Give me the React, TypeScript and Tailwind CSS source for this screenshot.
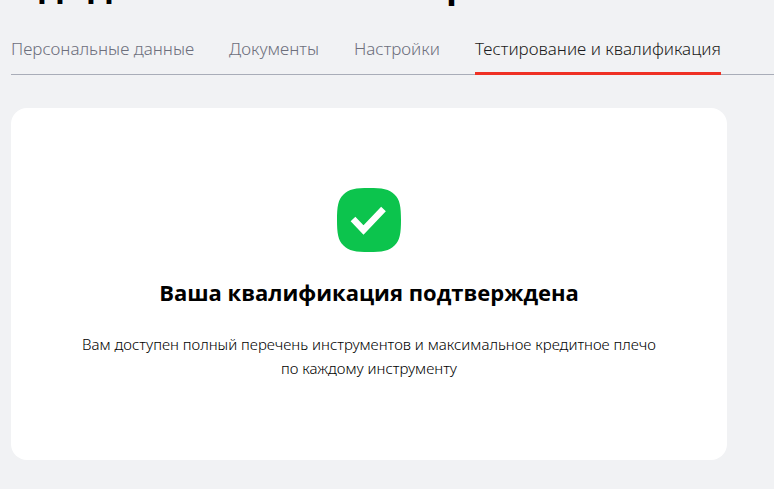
const tabs = [
  { label: "Персональные данные", href: "#personal" },
  { label: "Документы", href: "#documents" },
  { label: "Настройки", href: "#settings" },
  { label: "Тестирование и квалификация", href: "#qualification" },
];

const activeTab = "#qualification";

export default function App() {
  return (
    <div className="min-h-screen overflow-hidden bg-[#f1f2f4] pl-[11px] font-['Noto_Sans','Open_Sans',sans-serif] text-black">
      <PageTitle />
      <Tabs />
      <main className="mt-[33px] mr-[47px]">
        <StatusCard />
      </main>
    </div>
  );
}

// scrolled under the top edge, only the descenders stay in view
function PageTitle() {
  return (
    <h1 className="flex h-[6px] items-end overflow-hidden pl-7 font-['Open_Sans',sans-serif] text-4xl leading-[44px] font-bold">
      <span className="w-[49px]">д</span>
      <span className="w-[358px]">д</span>
      <span>р</span>
    </h1>
  );
}

function Tabs() {
  return (
    <nav className="mt-[28px] flex gap-[35px] border-b border-[#a9adb8] text-[17px] leading-[30px] font-light whitespace-nowrap">
      {tabs.map((tab) => (
        <a
          key={tab.href}
          href={tab.href}
          className={`-mb-px border-b-[3px] pb-2 ${
            tab.href === activeTab ? "border-[#ef3124] text-[#1c1c20]" : "border-transparent text-[#6d6f7c]"
          }`}
        >
          {tab.label}
        </a>
      ))}
    </nav>
  );
}

function StatusCard() {
  return (
    <section className="flex flex-col items-center rounded-2xl bg-white px-16 py-20 text-center">
      <CheckBadge />
      <h2 className="mt-6 font-['Open_Sans',sans-serif] text-[22px] leading-8 font-bold">Ваша квалификация подтверждена</h2>
      <p className="mt-6 text-[15px] leading-6 font-light">
        Вам доступен полный перечень инструментов и максимальное кредитное плечо по каждому инструменту
      </p>
    </section>
  );
}

function CheckBadge() {
  return (
    <svg className="size-16" viewBox="0 0 64 64" fill="none" aria-hidden="true">
      <path
        d="M32 0C45 0 52.500 1 57.500 6.500C63 11.500 64 19 64 32C64 45 63 52.500 57.500 57.500C52.500 63 45 64 32 64C19 64 11.500 63 6.500 57.500C1 52.500 0 45 0 32C0 19 1 11.500 6.500 6.500C11.500 1 19 0 32 0Z"
        fill="#0cc44d"
      />
      <path d="M16 31L26.500 42L46.500 21" stroke="#fff" strokeWidth="6.500" />
    </svg>
  );
}
